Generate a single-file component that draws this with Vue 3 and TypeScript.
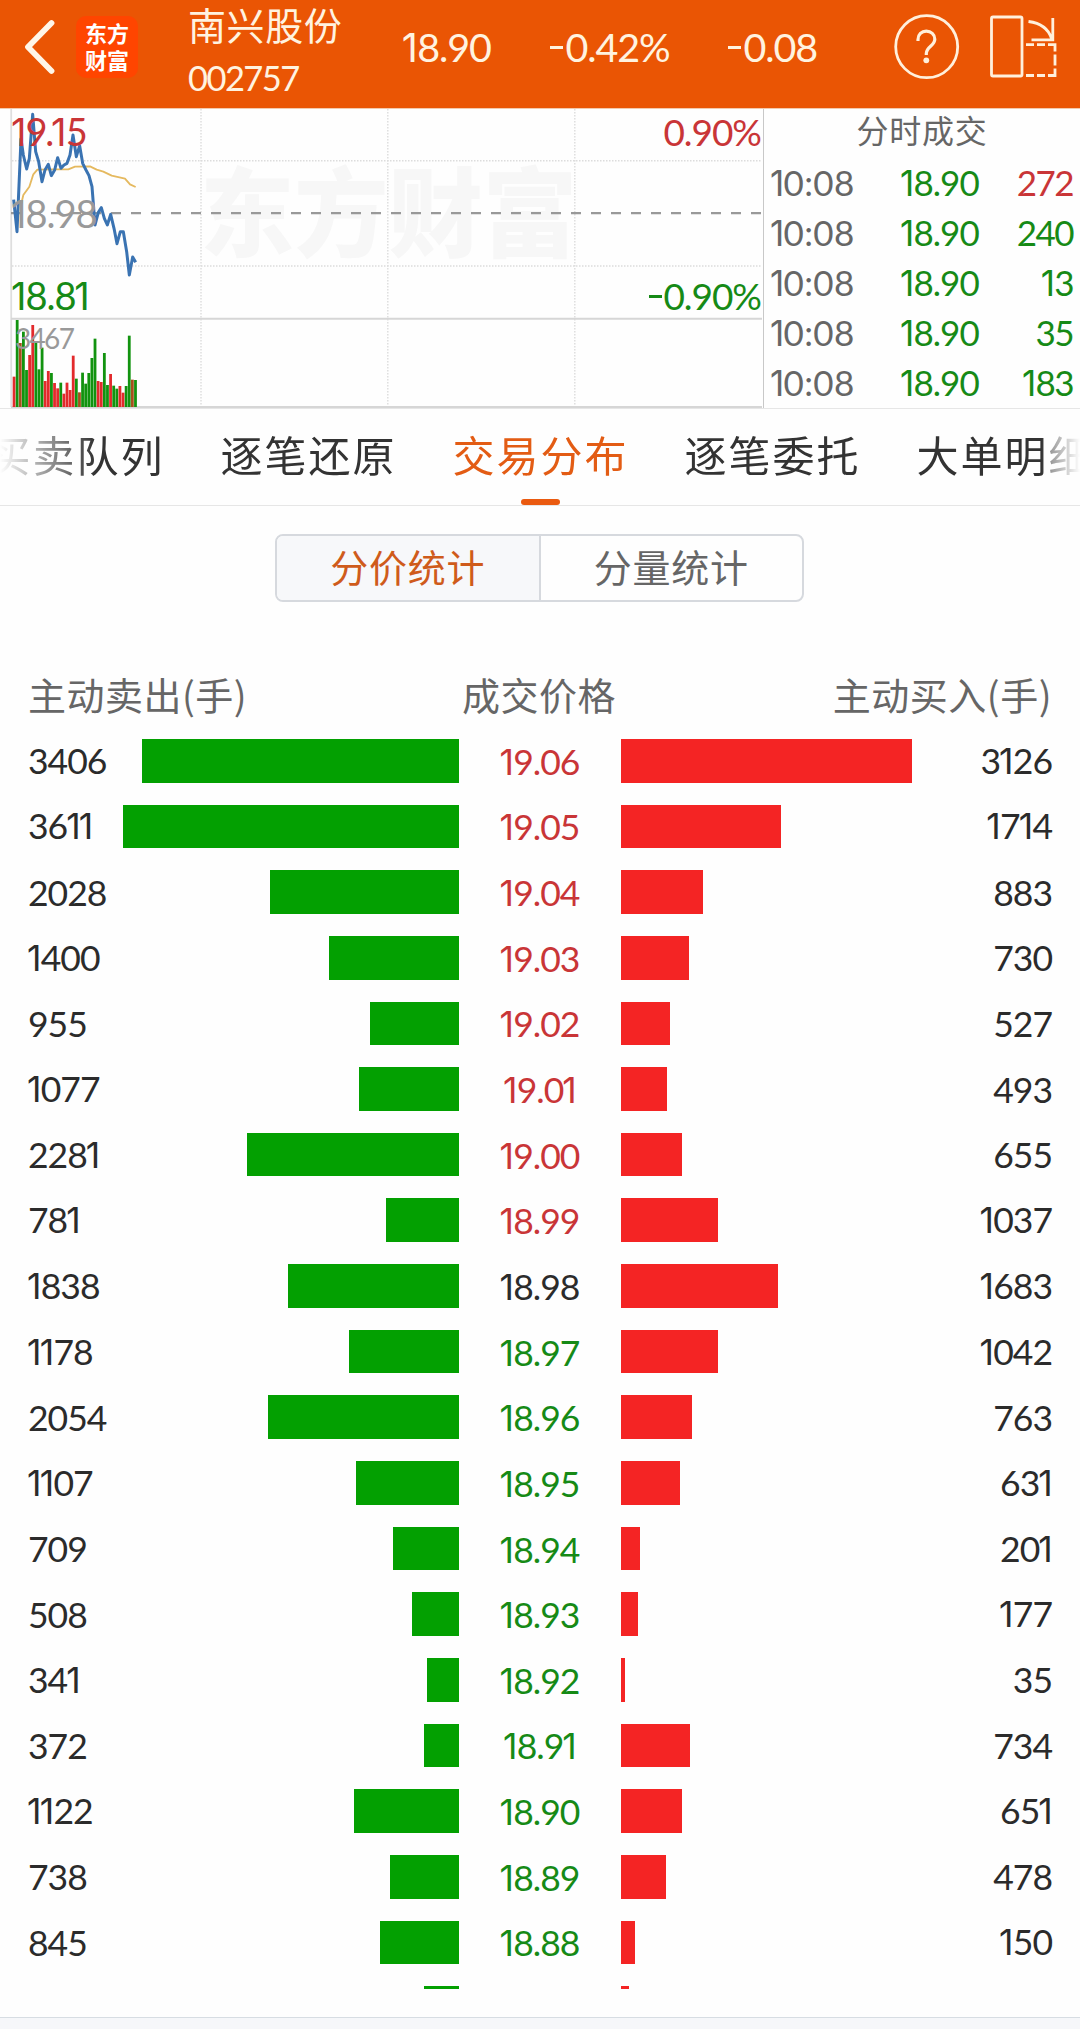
<script setup lang="ts">
import { h, type FunctionalComponent } from 'vue'

interface Level {
  sell: number
  price: string
  buy: number
}

// Numeric label with a proportional (narrow) figure one
const Num: FunctionalComponent<{ v: string | number }> = (props) =>
  h(
    'span',
    { class: 'num' },
    String(props.v)
      .split(/(1)/)
      .filter(Boolean)
      .map((part) => (part === '1' ? h('span', { class: 'num-one' }, '1') : part)),
  )
Num.props = ['v']

const PREV_CLOSE = 18.98
const UNIT = 0.093

const tabs = ['买卖队列', '逐笔还原', '交易分布', '逐笔委托', '大单明细']
const activeTab = '交易分布'

const trades = [
  { time: '10:08', price: '18.90', vol: 272, up: true },
  { time: '10:08', price: '18.90', vol: 240, up: false },
  { time: '10:08', price: '18.90', vol: 13, up: false },
  { time: '10:08', price: '18.90', vol: 35, up: false },
  { time: '10:08', price: '18.90', vol: 183, up: false },
]

const levels: Level[] = [
  { sell: 3406, price: '19.06', buy: 3126 },
  { sell: 3611, price: '19.05', buy: 1714 },
  { sell: 2028, price: '19.04', buy: 883 },
  { sell: 1400, price: '19.03', buy: 730 },
  { sell: 955, price: '19.02', buy: 527 },
  { sell: 1077, price: '19.01', buy: 493 },
  { sell: 2281, price: '19.00', buy: 655 },
  { sell: 781, price: '18.99', buy: 1037 },
  { sell: 1838, price: '18.98', buy: 1683 },
  { sell: 1178, price: '18.97', buy: 1042 },
  { sell: 2054, price: '18.96', buy: 763 },
  { sell: 1107, price: '18.95', buy: 631 },
  { sell: 709, price: '18.94', buy: 201 },
  { sell: 508, price: '18.93', buy: 177 },
  { sell: 341, price: '18.92', buy: 35 },
  { sell: 372, price: '18.91', buy: 734 },
  { sell: 1122, price: '18.90', buy: 651 },
  { sell: 738, price: '18.89', buy: 478 },
  { sell: 845, price: '18.88', buy: 150 },
]

// Next level, of which only the top edge of the bars is in view
const nextLevel = { sell: 370, buy: 78 }

function tone(price: string): string {
  const p = Number(price)
  return p > PREV_CLOSE ? 'up' : p < PREV_CLOSE ? 'down' : 'flat'
}

const barWidth = (v: number): string => `${(v * UNIT).toFixed(1)}px`

// Chart geometry is kept at three units per pixel
const priceLine =
  '41,284 51,380 63,102 70,150 80,192 88,160 98,28 107,140 116,170 126,230 135,195 145,178 154,212 164,195 173,158 183,190 192,180 201,175 210,150 219,90 229,155 239,122 248,175 258,195 267,212 276,245 285,360 295,322 304,308 313,340 322,360 332,328 342,370 351,416 361,380 370,380 380,440 388,510 398,456 407,472'
const averageLine =
  '63,300 70,270 88,245 100,208 112,194 160,193 205,193 225,185 270,184 290,194 310,200 335,212 375,221 390,238 407,246'

const volumes =
  'r815 g645 m714 g680 g795 r750 r660 g712 g793 g728 r828 r798 g804 r834 r850 g833 r866 r833 r855 r752 g821 m862 g803 g836 g804 g759 g701 r828 r831 g744 g840 r807 g842 g851 r843 r863 g843 g692 m824 g825'
    .split(' ')
    .map((s, i) => {
      const top = Number(s.slice(1))
      const fill = { r: '#e22a2c', g: '#12930f', m: '#a5501c' }[s[0] as 'r' | 'g' | 'm']
      return { x: 38 + i * 9.34, top, fill }
    })
</script>

<template>
  <div class="screen">
    <header class="bar">
      <svg class="back" width="40" height="60" viewBox="0 0 40 60">
        <path d="M33.5 6 L10 30 L33.5 54" fill="none" stroke="#fff6e8" stroke-width="5.8" stroke-linecap="round" stroke-linejoin="round" />
      </svg>
      <div class="logo"><span>东方</span><span>财富</span></div>
      <div class="stock">
        <div class="name">南兴股份</div>
        <div class="code"><Num v="002757" /></div>
      </div>
      <div class="quote q1"><Num v="18.90" /></div>
      <div class="quote q2"><i class="minus"></i><Num v="0.42%" /></div>
      <div class="quote q3"><i class="minus"></i><Num v="0.08" /></div>
      <svg class="icons" width="186" height="94" viewBox="894 0 186 94" fill="none" stroke="#fff0dc" stroke-width="2.8">
        <circle cx="926.7" cy="46.7" r="31" />
        <path d="M918 41 V39.5 C918 34.5 921.6 31.2 926.3 31.2 C931 31.2 934.8 34.5 934.8 39.2 C934.8 46 926.3 46.5 926.3 53.5 V55" stroke-width="3.2" />
        <circle cx="926.3" cy="60.3" r="2.9" fill="#fff0dc" stroke="none" />
        <rect x="991.5" y="17" width="30.5" height="59" rx="1.5" />
        <path d="M1028.5 21.5 C1040 23 1048.5 29 1051.5 38.5 M1052.8 18 V39.8 H1031.5" />
        <path d="M1026 44.7 H1034 M1037 44.7 H1045 M1048 44.7 H1055 V51.5 M1055 54.5 V65.5 M1055 68.5 V75.5 H1048 M1026 75.5 H1034 M1037 75.5 H1045" />
      </svg>
    </header>

    <section class="top">
      <div class="chart">
        <svg width="763" height="299" viewBox="0 109 763 299">
          <text class="mark" x="200" y="249" textLength="377" lengthAdjust="spacingAndGlyphs">东方财富</text>
          <g stroke="#dcdcdc" stroke-width="1.4" stroke-dasharray="1.5 1.5">
            <path d="M12 160.7 H762 M12 266 H762" />
            <path d="M201 109 V407 M387.8 109 V407 M574.8 109 V407" />
          </g>
          <path d="M11.2 109 V407" stroke="#dedede" stroke-width="1.8" />
          <path d="M11 318.7 H762 M11 407 H762" stroke="#d6d6d6" stroke-width="2" />
          <path d="M11 213.2 H762" stroke="#999" stroke-width="2.2" stroke-dasharray="10 10" />
          <g transform="translate(0 105) scale(0.33333)">
            <rect v-for="(b, i) in volumes" :key="i" :x="b.x" :y="b.top" width="8.4" :height="906 - b.top" :fill="b.fill" />
            <polyline :points="averageLine" fill="none" stroke="#e5b95f" stroke-width="5.5" stroke-linejoin="round" />
            <polyline :points="priceLine" fill="none" stroke="#3a73b2" stroke-width="9" stroke-linejoin="round" />
          </g>
        </svg>
        <div class="lbl high up"><Num v="19.15" /></div>
        <div class="lbl mid"><Num v="18.98" /></div>
        <div class="lbl low down"><Num v="18.81" /></div>
        <div class="lbl volmax"><Num v="3467" /></div>
        <div class="lbl pct high up"><Num v="0.90%" /></div>
        <div class="lbl pct low down"><i class="minus"></i><Num v="0.90%" /></div>
      </div>
      <aside class="ticks">
        <div class="ticks-title">分时成交</div>
        <div v-for="(t, i) in trades" :key="i" class="tick">
          <span class="time"><Num :v="t.time" /></span>
          <span class="tprice down"><Num :v="t.price" /></span>
          <span class="tvol" :class="t.up ? 'up' : 'down'"><Num :v="t.vol" /></span>
        </div>
      </aside>
    </section>

    <nav class="tabs">
      <div class="tabs-track">
        <div v-for="t in tabs" :key="t" class="tab" :class="{ active: t === activeTab }">{{ t }}</div>
      </div>
    </nav>

    <div class="segment">
      <div class="seg on">分价统计</div>
      <div class="seg">分量统计</div>
    </div>

    <div class="heads">
      <span class="hl">主动卖出(手)</span>
      <span class="hc">成交价格</span>
      <span class="hr">主动买入(手)</span>
    </div>

    <main class="levels">
      <div v-for="l in levels" :key="l.price" class="level">
        <div class="side left">
          <Num :v="l.sell" />
          <div class="fill sell" :style="{ width: barWidth(l.sell) }"></div>
        </div>
        <div class="price" :class="tone(l.price)"><Num :v="l.price" /></div>
        <div class="side right">
          <div class="fill buy" :style="{ width: barWidth(l.buy) }"></div>
          <Num :v="l.buy" />
        </div>
      </div>
      <div class="level next">
        <div class="side left end">
          <div class="fill sell" :style="{ width: barWidth(nextLevel.sell) }"></div>
        </div>
        <div class="price"></div>
        <div class="side right">
          <div class="fill buy" :style="{ width: barWidth(nextLevel.buy) }"></div>
        </div>
      </div>
    </main>

    <footer class="foot"></footer>
  </div>
</template>

<style>
body {
  background: #fefefe;
}
.num {
  position: relative;
  top: -1px;
  font-family: Lato, 'Liberation Sans', sans-serif;
  letter-spacing: -0.028em;
  white-space: nowrap;
}
.level .num {
  top: 0.5px;
}
.num-one {
  font-family: Inter, sans-serif;
  font-weight: 400;
  letter-spacing: 0;
  margin-left: -0.03em;
  margin-right: -0.02em;
}
</style>

<style scoped>
.screen {
  width: 1080px;
  height: 2029px;
  overflow: hidden;
  display: flex;
  flex-direction: column;
  background: #fefefe;
  color: #2b2b2b;
  font-family: 'Noto Sans CJK SC', sans-serif;
}
.up { color: #c93537; }
.down { color: #168a16; }
.flat { color: #2b2b2b; }
.minus {
  display: inline-block;
  width: 0.34em;
  height: 0.075em;
  margin-right: 0.05em;
  background: currentColor;
  vertical-align: 0.36em;
}

.bar {
  height: 109px;
  flex: none;
  display: flex;
  align-items: flex-start;
  background: #ea5504;
  color: #fff3e0;
  border-bottom: 1px solid #f3c9ad;
  box-sizing: border-box;
}
.back { margin: 17px 0 0 18px; flex: none; }
.logo {
  flex: none;
  width: 62px;
  height: 62px;
  margin: 16px 0 0 18px;
  padding-bottom: 3px;
  box-sizing: border-box;
  border-radius: 10px;
  background: #ff4500;
  color: #fff;
  display: flex;
  flex-direction: column;
  align-items: center;
  justify-content: center;
  font-size: 22px;
  line-height: 27px;
  font-weight: 700;
}
.stock { width: 215px; margin-left: 50px; flex: none; }
.name {
  height: 50px;
  line-height: 48px;
  font-size: 38px;
  letter-spacing: 0.6px;
}
.code { font-size: 34.5px; line-height: 54px; }
.code .num { letter-spacing: -0.045em; }
.quote {
  flex: none;
  font-size: 39.5px;
  line-height: 91px;
  text-align: left;
}
.q1 { width: 147px; }
.q2 { width: 178px; }
.q3 { width: 166px; }
.icons { flex: none; }

.top {
  height: 299px;
  flex: none;
  display: flex;
  border-bottom: 1px solid #e6e6e6;
}
.chart {
  position: relative;
  width: 763px;
  flex: none;
  border-right: 1px solid #c8c8c8;
}
.chart svg { display: block; }
.mark {
  font-family: 'Noto Sans CJK SC', sans-serif;
  font-size: 97px;
  font-weight: 900;
  fill: #f7f7f7;
}
.lbl {
  position: absolute;
  left: 12px;
  font-size: 38px;
  line-height: 40px;
}
.lbl.high { top: 2px; }
.lbl.high:not(.pct) .num { letter-spacing: -0.06em; }
.lbl.mid { top: 84px; color: #999; }
.lbl.low { top: 166px; }
.lbl.pct { left: auto; right: 2px; font-size: 37px; }
.lbl.volmax { left: 15px; top: 209px; font-size: 28px; color: #999; }
.lbl.volmax .num { letter-spacing: -0.06em; }

.ticks { flex: 1; padding: 0 7px 0 7px; }
.ticks-title {
  height: 48px;
  line-height: 41px;
  text-align: center;
  font-size: 32px;
  letter-spacing: 0.8px;
  color: #666;
}
.tick {
  display: flex;
  height: 50px;
  line-height: 49px;
  font-size: 35px;
}
.time { width: 130px; color: #666; }
.time .num { letter-spacing: 0.01em; }
.tprice { width: 90px; }
.tvol { flex: 1; text-align: right; }
.tvol .num { letter-spacing: -0.045em; }

.tabs {
  height: 96px;
  flex: none;
  overflow: hidden;
  border-bottom: 1px solid #e6e6e6;
  display: flex;
  justify-content: center;
}
.tabs-track {
  display: flex;
  flex: none;
  width: 1160px;
  -webkit-mask-image: linear-gradient(90deg, transparent 40px, #000 135px, #000 1082px, rgba(0, 0, 0, 0.5) 1090px, transparent 1120px);
  mask-image: linear-gradient(90deg, transparent 40px, #000 135px, #000 1082px, rgba(0, 0, 0, 0.5) 1090px, transparent 1120px);
}
.tab {
  width: 232px;
  box-sizing: border-box;
  padding-left: 1px;
  display: flex;
  flex-direction: column;
  align-items: center;
  font-size: 42px;
  line-height: 90px;
  height: 96px;
  letter-spacing: 2px;
  color: #333;
}
.active { color: #e35c14; }
.active::after {
  content: '';
  width: 39px;
  height: 6px;
  border-radius: 3px;
  background: #ea5a10;
}

.segment {
  flex: none;
  width: 529px;
  height: 68px;
  box-sizing: border-box;
  margin: 28px 0 0 275px;
  display: flex;
  border: 2px solid #d6d9de;
  border-radius: 8px;
  overflow: hidden;
}
.seg {
  flex: 1;
  text-align: center;
  font-size: 38px;
  letter-spacing: 0.8px;
  line-height: 60px;
  color: #666;
}
.seg.on {
  background: #f7f8fa;
  color: #cf5b1b;
  border-right: 2px solid #d6d9de;
}

.heads {
  flex: none;
  margin-top: 66px;
  height: 71px;
  padding: 0 28px 0 28px;
  display: grid;
  grid-template-columns: 1fr 160px 1fr;
  font-size: 38px;
  letter-spacing: 0.5px;
  line-height: 52px;
  color: #666;
}
.hc { text-align: center; margin-left: -2px; }
.hr { text-align: right; }

.levels {
  flex: none;
  height: 1250px;
  overflow: hidden;
}
.level {
  height: 43.65px;
  margin-bottom: 22px;
  padding: 0 28px;
  display: flex;
  align-items: center;
  font-size: 35.5px;
  line-height: 44px;
}
.side {
  height: 100%;
  display: flex;
  justify-content: space-between;
  align-items: center;
}
.side.left { width: 430.7px; }
.side.end { justify-content: flex-end; }
.side.right { flex: 1; }
.fill { height: 100%; }
.sell { background: #03a001; }
.buy { background: #f42424; }
.price { width: 162.6px; text-align: center; }

.foot {
  margin-top: auto;
  height: 12px;
  flex: none;
  box-sizing: border-box;
  border-top: 1px solid #d7dde3;
  background: #f6f7fa;
}
</style>
